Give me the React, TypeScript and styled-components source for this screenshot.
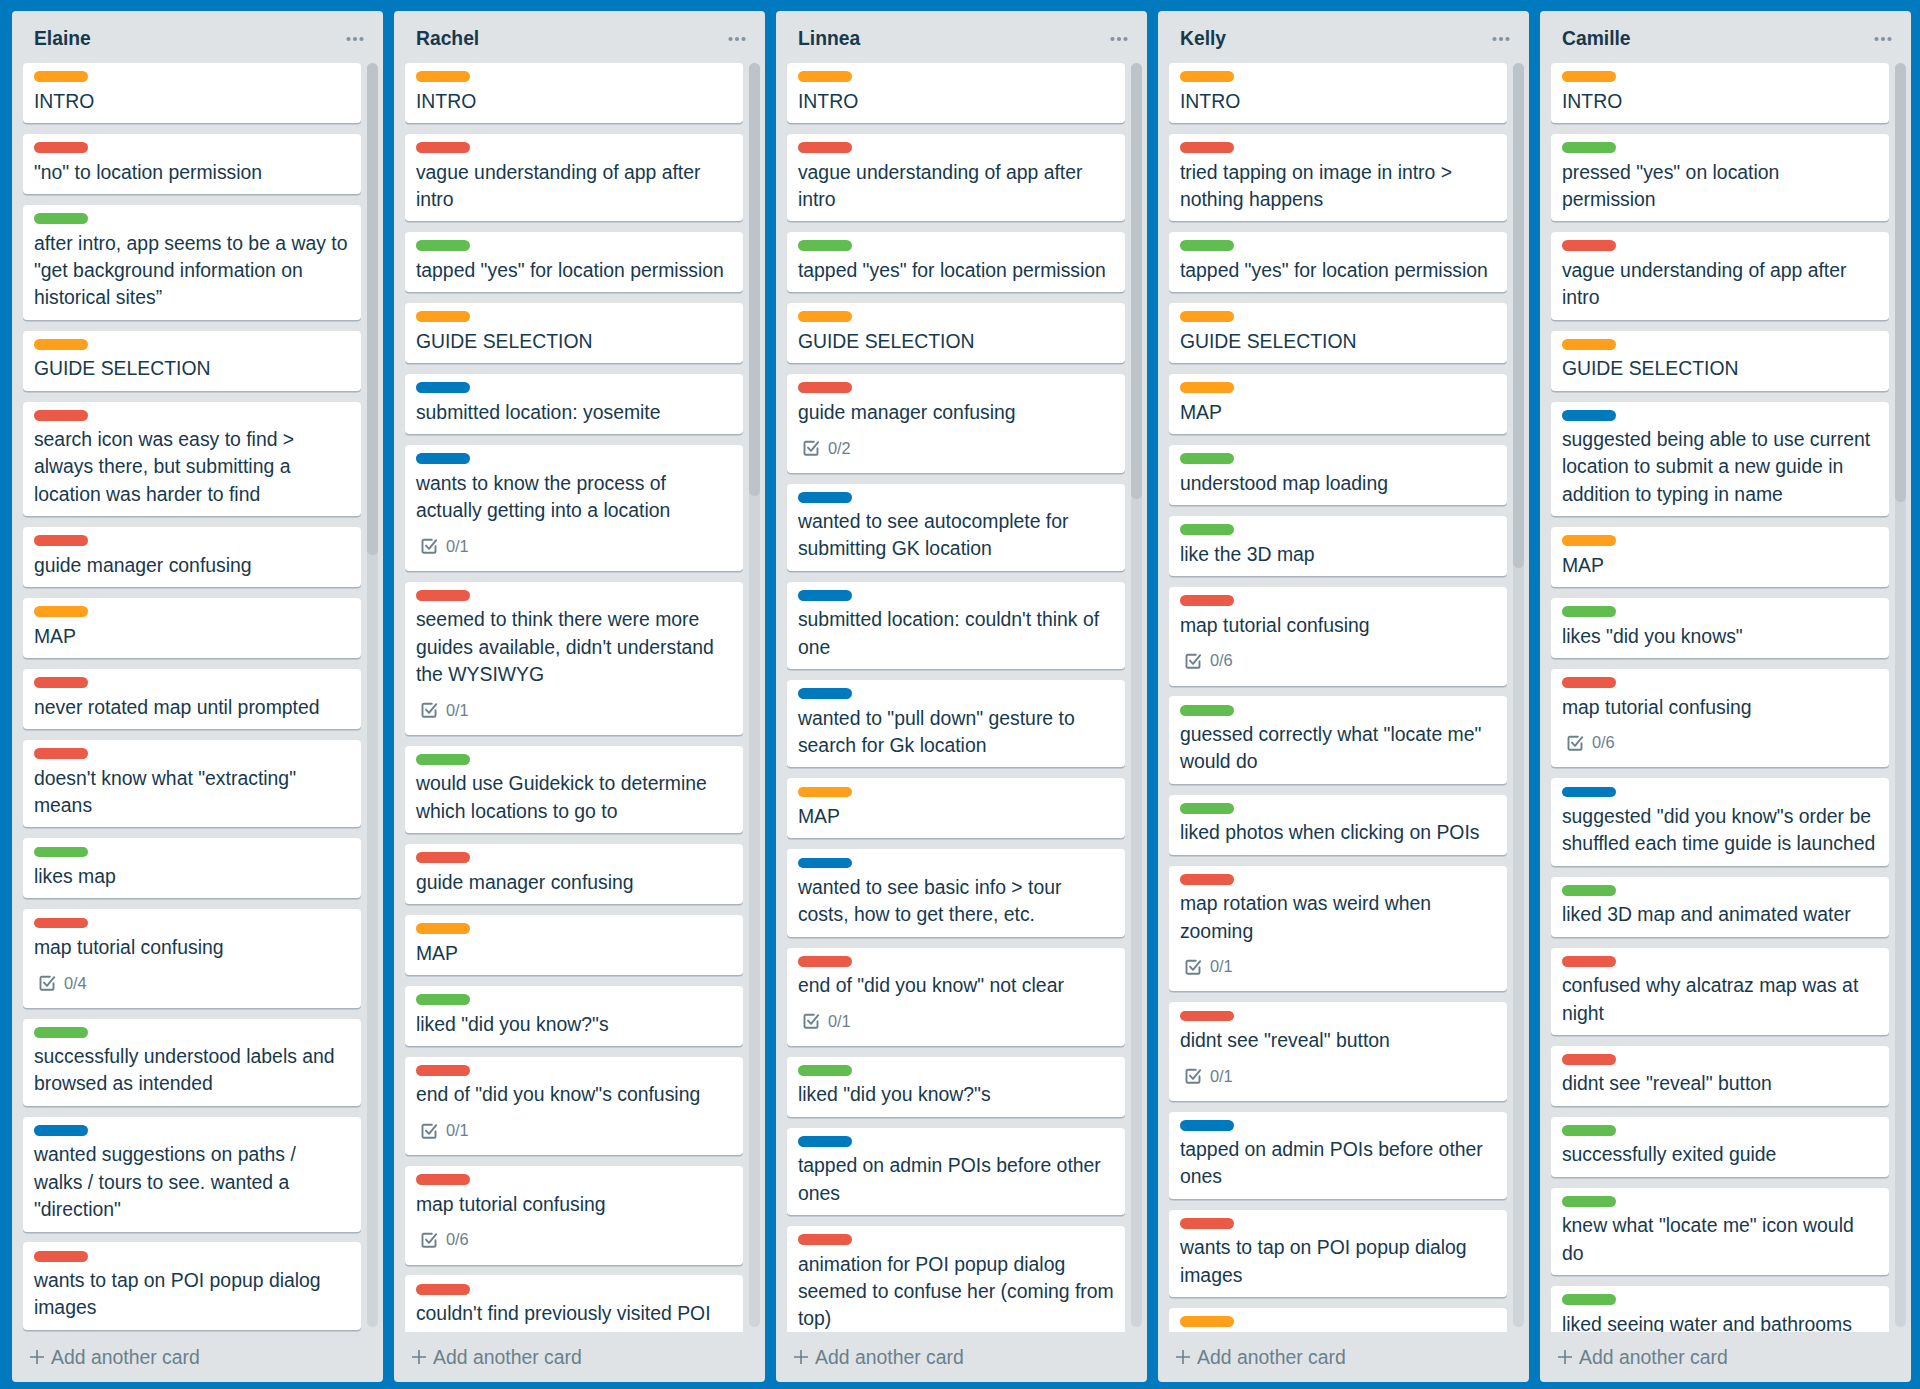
import React from "react";
import styled, { createGlobalStyle } from "styled-components";

type LabelColor = "orange" | "red" | "green" | "blue";

interface CardData {
  label: LabelColor;
  lines: string[];
  checklist?: string;
}

interface ListData {
  name: string;
  thumb: number;
  cards: CardData[];
}

const LABEL_COLORS: Record<LabelColor, string> = {
  orange: "#ff9f1a",
  red: "#eb5a46",
  green: "#61bd4f",
  blue: "#0079bf",
};

const lists: ListData[] = [
  {
    name: "Elaine",
    thumb: 492,
    cards: [
      { label: "orange", lines: ["INTRO"] },
      { label: "red", lines: ['"no" to location permission'] },
      {
        label: "green",
        lines: ["after intro, app seems to be a way to", '"get background information on', "historical sites\u201d"],
      },
      { label: "orange", lines: ["GUIDE SELECTION"] },
      {
        label: "red",
        lines: ["search icon was easy to find >", "always there, but submitting a", "location was harder to find"],
      },
      { label: "red", lines: ["guide manager confusing"] },
      { label: "orange", lines: ["MAP"] },
      { label: "red", lines: ["never rotated map until prompted"] },
      { label: "red", lines: ['doesn\'t know what "extracting"', "means"] },
      { label: "green", lines: ["likes map"] },
      { label: "red", lines: ["map tutorial confusing"], checklist: "0/4" },
      { label: "green", lines: ["successfully understood labels and", "browsed as intended"] },
      {
        label: "blue",
        lines: ["wanted suggestions on paths /", "walks / tours to see. wanted a", '"direction"'],
      },
      { label: "red", lines: ["wants to tap on POI popup dialog", "images"] },
    ],
  },
  {
    name: "Rachel",
    thumb: 433,
    cards: [
      { label: "orange", lines: ["INTRO"] },
      { label: "red", lines: ["vague understanding of app after", "intro"] },
      { label: "green", lines: ['tapped "yes" for location permission'] },
      { label: "orange", lines: ["GUIDE SELECTION"] },
      { label: "blue", lines: ["submitted location: yosemite"] },
      {
        label: "blue",
        lines: ["wants to know the process of", "actually getting into a location"],
        checklist: "0/1",
      },
      {
        label: "red",
        lines: ["seemed to think there were more", "guides available, didn't understand", "the WYSIWYG"],
        checklist: "0/1",
      },
      { label: "green", lines: ["would use Guidekick to determine", "which locations to go to"] },
      { label: "red", lines: ["guide manager confusing"] },
      { label: "orange", lines: ["MAP"] },
      { label: "green", lines: ['liked "did you know?"s'] },
      { label: "red", lines: ['end of "did you know"s confusing'], checklist: "0/1" },
      { label: "red", lines: ["map tutorial confusing"], checklist: "0/6" },
      { label: "red", lines: ["couldn't find previously visited POI"] },
    ],
  },
  {
    name: "Linnea",
    thumb: 436,
    cards: [
      { label: "orange", lines: ["INTRO"] },
      { label: "red", lines: ["vague understanding of app after", "intro"] },
      { label: "green", lines: ['tapped "yes" for location permission'] },
      { label: "orange", lines: ["GUIDE SELECTION"] },
      { label: "red", lines: ["guide manager confusing"], checklist: "0/2" },
      { label: "blue", lines: ["wanted to see autocomplete for", "submitting GK location"] },
      { label: "blue", lines: ["submitted location: couldn't think of", "one"] },
      { label: "blue", lines: ['wanted to "pull down" gesture to', "search for Gk location"] },
      { label: "orange", lines: ["MAP"] },
      { label: "blue", lines: ["wanted to see basic info > tour", "costs, how to get there, etc."] },
      { label: "red", lines: ['end of "did you know" not clear'], checklist: "0/1" },
      { label: "green", lines: ['liked "did you know?"s'] },
      { label: "blue", lines: ["tapped on admin POIs before other", "ones"] },
      {
        label: "red",
        lines: ["animation for POI popup dialog", "seemed to confuse her (coming from", "top)"],
      },
    ],
  },
  {
    name: "Kelly",
    thumb: 505,
    cards: [
      { label: "orange", lines: ["INTRO"] },
      { label: "red", lines: ["tried tapping on image in intro >", "nothing happens"] },
      { label: "green", lines: ['tapped "yes" for location permission'] },
      { label: "orange", lines: ["GUIDE SELECTION"] },
      { label: "orange", lines: ["MAP"] },
      { label: "green", lines: ["understood map loading"] },
      { label: "green", lines: ["like the 3D map"] },
      { label: "red", lines: ["map tutorial confusing"], checklist: "0/6" },
      { label: "green", lines: ['guessed correctly what "locate me"', "would do"] },
      { label: "green", lines: ["liked photos when clicking on POIs"] },
      { label: "red", lines: ["map rotation was weird when", "zooming"], checklist: "0/1" },
      { label: "red", lines: ['didnt see "reveal" button'], checklist: "0/1" },
      { label: "blue", lines: ["tapped on admin POIs before other", "ones"] },
      { label: "red", lines: ["wants to tap on POI popup dialog", "images"] },
      { label: "orange", lines: [] },
    ],
  },
  {
    name: "Camille",
    thumb: 439,
    cards: [
      { label: "orange", lines: ["INTRO"] },
      { label: "green", lines: ['pressed "yes" on location', "permission"] },
      { label: "red", lines: ["vague understanding of app after", "intro"] },
      { label: "orange", lines: ["GUIDE SELECTION"] },
      {
        label: "blue",
        lines: ["suggested being able to use current", "location to submit a new guide in", "addition to typing in name"],
      },
      { label: "orange", lines: ["MAP"] },
      { label: "green", lines: ['likes "did you knows"'] },
      { label: "red", lines: ["map tutorial confusing"], checklist: "0/6" },
      {
        label: "blue",
        lines: ['suggested "did you know"s order be', "shuffled each time guide is launched"],
      },
      { label: "green", lines: ["liked 3D map and animated water"] },
      { label: "red", lines: ["confused why alcatraz map was at", "night"] },
      { label: "red", lines: ['didnt see "reveal" button'] },
      { label: "green", lines: ["successfully exited guide"] },
      { label: "green", lines: ['knew what "locate me" icon would', "do"] },
      { label: "green", lines: ["liked seeing water and bathrooms"] },
    ],
  },
];

const GlobalStyle = createGlobalStyle`
  html, body {
    margin: 0;
    padding: 0;
    background: #0079bf;
    overflow: hidden;
  }
  body {
    font-family: "Liberation Sans", Arial, Helvetica, sans-serif;
    color: #17394d;
  }
  * { box-sizing: border-box; }
`;

const Board = styled.main`
  display: flex;
  gap: 11px;
  height: 100vh;
  padding: 11px 9px 7px 12px;
  background: #0079bf;
  overflow: hidden;
`;

const List = styled.section`
  width: 371px;
  flex-shrink: 0;
  height: 100%;
  display: flex;
  flex-direction: column;
  background: #dfe3e6;
  border-radius: 4px;
`;

const ListHeader = styled.header`
  height: 52px;
  flex-shrink: 0;
  display: flex;
  align-items: center;
  justify-content: space-between;
  padding: 3px 19px 0 22px;
`;

const ListTitle = styled.h2`
  margin: 0;
  font-size: 19.3px;
  line-height: 26px;
  font-weight: 700;
  color: #17394d;
`;

const MenuDots = styled.svg`
  width: 18px;
  height: 6px;
  fill: #8593a0;
`;

const ListBody = styled.div`
  flex: 1;
  min-height: 0;
  display: flex;
  padding-left: 11px;
  padding-right: 5px;
`;

const CardColumn = styled.div`
  width: 338px;
  flex-shrink: 0;
  height: 100%;
  overflow: hidden;
  display: flex;
  flex-direction: column;
  gap: 10.93px;
`;

const ScrollTrack = styled.div`
  width: 11px;
  margin-left: 6px;
  margin-bottom: 5px;
  border-radius: 6px;
  background: #cfd4d8;
  display: flex;
  flex-direction: column;
`;

const ScrollThumb = styled.div<{ $h: number }>`
  height: ${(p) => p.$h}px;
  border-radius: 6px;
  background: #bcc3c9;
`;

const Card = styled.article`
  flex-shrink: 0;
  background: #fff;
  border-radius: 4px;
  box-shadow: 0 1.4px 0 rgba(9, 30, 66, 0.25);
  padding: 8.2px 10.9px 2.7px;
  min-height: 60px;
`;

const Label = styled.span<{ $color: LabelColor }>`
  display: block;
  width: 54.6px;
  height: 10.9px;
  border-radius: 5.5px;
  margin-bottom: 5.5px;
  background: ${(p) => LABEL_COLORS[p.$color]};
`;

const CardTitle = styled.p`
  margin: 0 0 5.5px;
  font-size: 19.4px;
  line-height: 27.3px;
  white-space: nowrap;
  color: #17394d;
`;

const Badges = styled.div`
  display: flex;
  margin-left: -2.7px;
  margin-bottom: 5.5px;
`;

const Badge = styled.span`
  display: flex;
  align-items: center;
  height: 32.8px;
  padding: 2.7px;
  color: #6b808c;
  font-size: 16.4px;
`;

const BadgeIcon = styled.svg`
  width: 27px;
  height: 16px;
  fill: none;
  stroke: #6b808c;
  stroke-width: 1.9;
  stroke-linecap: round;
  stroke-linejoin: round;
`;

const BadgeText = styled.span`
  padding: 0 5px 0 3px;
  line-height: 27px;
`;

const ListFooter = styled.footer`
  height: 50px;
  flex-shrink: 0;
  display: flex;
  align-items: center;
  gap: 6px;
  padding: 0 0 0 17px;
  color: #6b808c;
  font-size: 19.4px;
`;

const PlusIcon = styled.svg`
  width: 16px;
  height: 16px;
  stroke: #6b808c;
  stroke-width: 1.6;
  fill: none;
`;

function CardView({ card }: { card: CardData }) {
  return (
    <Card>
      <Label $color={card.label} />
      {card.lines.length > 0 && (
        <CardTitle>
          {card.lines.map((line, i) => (
            <React.Fragment key={i}>
              {i > 0 && <br />}
              {line}
            </React.Fragment>
          ))}
        </CardTitle>
      )}
      {card.checklist && (
        <Badges>
          <Badge>
            <BadgeIcon viewBox="0 0 27 16">
              <path d="M19.5 8.2v5.3a1.3 1.3 0 0 1-1.3 1.3H7.8a1.3 1.3 0 0 1-1.3-1.3V3.1a1.3 1.3 0 0 1 1.3-1.3h8" />
              <path d="M10 7.6l3 3.2 7.2-8.6" />
            </BadgeIcon>
            <BadgeText>{card.checklist}</BadgeText>
          </Badge>
        </Badges>
      )}
    </Card>
  );
}

function ListView({ list }: { list: ListData }) {
  return (
    <List>
      <ListHeader>
        <ListTitle>{list.name}</ListTitle>
        <MenuDots viewBox="0 0 18 6">
          <circle cx="2.5" cy="3" r="2.1" />
          <circle cx="9" cy="3" r="2.1" />
          <circle cx="15.5" cy="3" r="2.1" />
        </MenuDots>
      </ListHeader>
      <ListBody>
        <CardColumn>
          {list.cards.map((c, i) => (
            <CardView key={i} card={c} />
          ))}
        </CardColumn>
        <ScrollTrack>
          <ScrollThumb $h={list.thumb} />
        </ScrollTrack>
      </ListBody>
      <ListFooter>
        <PlusIcon viewBox="0 0 16 16">
          <path d="M8 1v14M1 8h14" />
        </PlusIcon>
        <span>Add another card</span>
      </ListFooter>
    </List>
  );
}

export default function App() {
  return (
    <>
      <GlobalStyle />
      <Board>
        {lists.map((l) => (
          <ListView key={l.name} list={l} />
        ))}
      </Board>
    </>
  );
}
